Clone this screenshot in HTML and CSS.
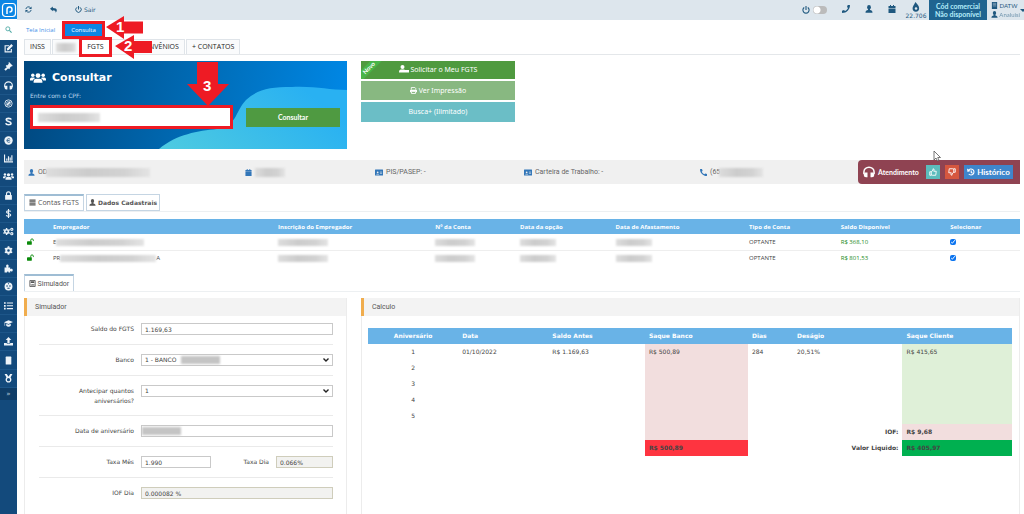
FILE: index.html
```html
<!DOCTYPE html>
<html lang="pt-BR">
<head>
<meta charset="utf-8">
<title>Consulta FGTS</title>
<link rel="stylesheet" href="styles.css">
</head>
<body>
<svg class="defs" aria-hidden="true">
  <symbol id="search" viewBox="0 0 16 16"><circle cx="6.5" cy="6.5" r="4.6" fill="none" stroke="currentColor" stroke-width="2"/><path d="M10 10l5 5" stroke="currentColor" stroke-width="2.4"/></symbol>
  <symbol id="edit" viewBox="0 0 16 16"><path d="M9 3H2v11h11V9" fill="none" stroke="currentColor" stroke-width="2"/><path d="M13 0l3 3-7.500 7.500L5 11.500l.8-3.800z"/></symbol>
  <symbol id="gavel" viewBox="0 0 16 16"><path d="M9 0l6.500 6.500-1.500 1.500-1-.5-3 3 .5 1L9 13 3 7l1.500-1.500 1 .5 3-3-.5-1.500zM5.500 9l2 2L3 15.500 .5 13z"/></symbol>
  <symbol id="headset" viewBox="0 0 16 16"><path d="M1.200 11V8a6.800 6.500 0 0 1 13.600 0v3" fill="none" stroke="currentColor" stroke-width="2"/><path d="M2 8.500h4V15H4a3 3 0 0 1-3-3zM10 8.500h4l1 3.500a3 3 0 0 1-3 3h-2z"/></symbol>
  <symbol id="compass" viewBox="0 0 16 16"><circle cx="8" cy="8" r="6.500" fill="none" stroke="currentColor" stroke-width="1.500"/><circle cx="8" cy="8" r="3.800" fill="none" stroke="currentColor"/><path d="M12 4L9.500 9.500 4 12l2.500-5.500z"/></symbol>
  <symbol id="letter-s" viewBox="0 0 16 16"><path d="M13 4.500C12 2 4 1.500 4 5c0 3.500 8.500 2.500 8.500 6 0 3.500-8.500 3.500-9.500 0" fill="none" stroke="currentColor" stroke-width="2.800"/></symbol>
  <symbol id="coin" viewBox="0 0 16 16"><circle cx="8" cy="8" r="7.500"/><path d="M11 6C9 3.500 5 5 5 8s4 4.500 6 2M5.500 8H10" fill="none" stroke="#134a7c" stroke-width="1.300"/></symbol>
  <symbol id="chart" viewBox="0 0 16 16"><path d="M0 1h2v12h14v2H0zM4 8h2v4H4zM7 4h2v8H7zM10 6h2v6h-2zM13 2h2v10h-2z"/></symbol>
  <symbol id="users" viewBox="0 0 20 16"><circle cx="10" cy="5" r="3"/><circle cx="3.500" cy="4.500" r="2.200"/><circle cx="16.500" cy="4.500" r="2.200"/><path d="M4.500 14v-2a3.500 3 0 0 1 3-3h5a3.500 3 0 0 1 3 3v2zM0 11V9.500A2 2 0 0 1 2 7.500h3.500L6 8.500a4 4 0 0 0-2.500 2.500zM20 11V9.500a2 2 0 0 0-2-2h-3.500l-.5 1a4 4 0 0 1 2.500 2.500z"/></symbol>
  <symbol id="lock" viewBox="0 0 16 16"><path d="M4.500 8V5a3.500 3.500 0 0 1 7 0v3" fill="none" stroke="currentColor" stroke-width="2"/><rect x="2" y="7" width="12" height="8.500" rx="1"/></symbol>
  <symbol id="unlock" viewBox="0 0 16 16"><path d="M8.500 8V5a3 3 0 0 1 6 0v2" fill="none" stroke="currentColor" stroke-width="2"/><rect x="0" y="7.500" width="11" height="8" rx="1"/></symbol>
  <symbol id="dollar" viewBox="0 0 16 16"><path d="M12 4.500C11 2.500 4.500 2.500 4.500 5.300c0 3 7.500 2.200 7.500 5.300 0 3-7 3-8 .4M8 0v16" fill="none" stroke="currentColor" stroke-width="2"/></symbol>
  <symbol id="cog" viewBox="0 0 16 16"><circle cx="8" cy="8" r="4" fill="none" stroke="currentColor" stroke-width="3.400"/><path d="M8 .5V3M8 13v2.500M1.500 4.250l2.200 1.250M12.300 10.500l2.200 1.250M1.500 11.750l2.200-1.250M12.300 5.500l2.200-1.250" stroke="currentColor" stroke-width="3"/></symbol>
  <symbol id="cogs" viewBox="0 0 20 16"><circle cx="6.500" cy="8" r="3.300" fill="none" stroke="currentColor" stroke-width="2.800"/><path d="M6.500 1.500V4M6.500 12v2.500M.8 4.800L3 6M10 10l2.200 1.200M.8 11.200L3 10M10 6l2.200-1.200" stroke="currentColor" stroke-width="2.600"/><circle cx="16" cy="4" r="2" fill="none" stroke="currentColor" stroke-width="2"/><circle cx="16" cy="12" r="2" fill="none" stroke="currentColor" stroke-width="2"/></symbol>
  <symbol id="puzzle" viewBox="0 0 16 16"><path d="M1 6h3.500C3 3 4 1 6 1s3 2 1.500 5H11v3.500C13 8 15.500 8.500 15.500 11S13 13.500 11 12.500V15H8c.8-2.500-3.200-2.500-2.500 0H1z"/></symbol>
  <symbol id="palette" viewBox="0 0 16 16"><circle cx="8" cy="8" r="7"/><path d="M4 6h3v2H4zM9 6h3v2H9zM6 10h4v2H6zM7 2h2v2H7z" fill="#134a7c"/></symbol>
  <symbol id="tasks" viewBox="0 0 16 16"><path d="M0 2h3v3H0zM0 7h3v3H0zM0 12h3v3H0zM5 2.500h11v2H5zM5 7.500h11v2H5zM5 12.500h11v2H5z"/></symbol>
  <symbol id="grad" viewBox="0 0 16 16"><path d="M8 2l8 3.500L8 9 2 6.500V12H1V5.500zM4 8.500l4 1.800 4-1.800V12c-2 2.500-6 2.500-8 0z"/></symbol>
  <symbol id="upload" viewBox="0 0 16 16"><path d="M8 0l5 5.500h-3V11H6V5.500H3zM0 10.500h5V12h6v-1.500h5V15H0z"/></symbol>
  <symbol id="device" viewBox="0 0 16 16"><rect x="3" y="1" width="10" height="14" rx="1"/></symbol>
  <symbol id="medal" viewBox="0 0 16 16"><circle cx="8" cy="10" r="4" fill="none" stroke="currentColor" stroke-width="2.400"/><path d="M1 0h4l3 5 3-5h4l-4 7H5z"/></symbol>
  <symbol id="refresh" viewBox="0 0 16 16"><path d="M2 7a6 6 0 0 1 10.500-3M14 9a6 6 0 0 1-10.500 3" fill="none" stroke="currentColor" stroke-width="2.200"/><path d="M15 1v6H9zM1 15V9h6z"/></symbol>
  <symbol id="reply" viewBox="0 0 16 16"><path d="M0 6.500L6.500 1v3.500C12 4.500 16 6 15.500 10c0 2-1.500 4-3 5 1-4-1.500-5.500-6-5.500V12z"/></symbol>
  <symbol id="power" viewBox="0 0 16 16"><path d="M4.500 3a6.200 6.200 0 1 0 7 0M8 0v8" fill="none" stroke="currentColor" stroke-width="2.200"/></symbol>
  <symbol id="phone" viewBox="0 0 16 16"><path d="M15 0l1 .5C16 9 9 16 .5 16L0 15v-3.500L4 10l2 2c3-1.500 4.500-3 6-6l-2-2 1.500-4z"/></symbol>
  <symbol id="phone-left" viewBox="0 0 16 16"><path d="M1 0L0 .5C0 9 7 16 15.500 16l.5-1v-3.500L12 10l-2 2C7 10.500 5.500 9 4 6l2-2L4.500 0z"/></symbol>
  <symbol id="user" viewBox="0 0 16 16"><ellipse cx="8" cy="4.500" rx="3.800" ry="4.500"/><path d="M6 8h4v2c3 .5 5 1.500 5 5.500H1C1 11.500 3 10.500 6 10z"/></symbol>
  <symbol id="calendar" viewBox="0 0 16 16"><path d="M4 0h2v2h4V0h2v2h3v4H1V2h3zM1 7h14v9H1z"/></symbol>
  <symbol id="fire" viewBox="0 0 16 16"><path d="M7 0c2 3 6 5.500 6 10a5.200 5.500 0 0 1-10.500 0C2.500 7 5 5 7 0z"/><circle cx="8" cy="10.500" r="2" fill="#dde6ed"/></symbol>
  <symbol id="building" viewBox="0 0 16 16"><path d="M2 0h12v16H2z"/><path d="M4 3h8M4 6h8M4 9h8" stroke="#dde6ed"/></symbol>
  <symbol id="user-plus" viewBox="0 0 20 16"><circle cx="7" cy="4" r="4"/><path d="M0 15c0-4.500 1.500-6 4-6h6c1 0 1.500.5 2 1v5zM10 10h10v5H10z"/></symbol>
  <symbol id="print" viewBox="0 0 16 16"><path d="M3 6V1h8l2 2v3M3.500 10h9v5h-9z" fill="none" stroke="currentColor" stroke-width="2"/><path d="M0 12V8a2 2 0 0 1 2-2h12a2 2 0 0 1 2 2v4h-3V9.500H3V12z"/></symbol>
  <symbol id="idcard" viewBox="0 0 18 14"><rect width="18" height="14" rx="1"/><path d="M11 6h5M11 9h5M3 11h6" stroke="#efefef" stroke-width="1.300"/><circle cx="6" cy="6.500" r="2" fill="#efefef"/></symbol>
  <symbol id="list" viewBox="0 0 16 16"><path d="M1 1h14v3H1zM1 5h14v2.500H1zM1 8.500h14V11H1zM1 12h14v3H1z"/></symbol>
  <symbol id="calc" viewBox="0 0 16 16"><path d="M2 1h12v14H2z" fill="none" stroke="currentColor" stroke-width="2"/><path d="M4 3h8v4H4zM4 9h2v2H4zM7 9h2v2H7zM10 9h2v4h-2zM4 12h5v1H4z"/></symbol>
  <symbol id="thumb" viewBox="0 0 16 16"><path d="M1.500 7.500h3v7h-3zM4.500 8L8 4V1.500c2.500 0 2.500 2 1.500 5h5l-1 8h-7l-2-1" fill="none" stroke="currentColor" stroke-width="1.800"/></symbol>
  <symbol id="history" viewBox="0 0 16 16"><path d="M3 4.500A6 6 0 1 1 3.500 12M8.500 5v4l2.500 1.500" fill="none" stroke="currentColor" stroke-width="2.200"/><path d="M0 1l1 7 6-2z"/></symbol>
</svg>

<aside class="sidebar">
  <a class="logo" href="#" aria-label="Início"><svg viewBox="0 0 16 16"><rect x="1.500" y="1.500" width="13" height="13" rx="3" fill="none" stroke="#fff" stroke-width="1.200"/><path d="M6 12V7.500A2.500 2.500 0 1 1 8.500 10" fill="none" stroke="#fff" stroke-width="1.500"/></svg></a>
  <button class="side-search" aria-label="Pesquisar"><svg class="ico"><use href="#search"/></svg></button>
  <nav class="side-nav">
    <a href="#" aria-label="Editar"><svg class="ico"><use href="#edit"/></svg></a>
    <a href="#" aria-label="Jurídico"><svg class="ico"><use href="#gavel"/></svg></a>
    <a href="#" aria-label="Atendimento"><svg class="ico"><use href="#headset"/></svg></a>
    <a href="#" aria-label="Navegar"><svg class="ico"><use href="#compass"/></svg></a>
    <a href="#" aria-label="Simulações"><svg class="ico"><use href="#letter-s"/></svg></a>
    <a href="#" aria-label="Moeda"><svg class="ico"><use href="#coin"/></svg></a>
    <a href="#" aria-label="Relatórios"><svg class="ico"><use href="#chart"/></svg></a>
    <a href="#" aria-label="Clientes"><svg class="ico wide"><use href="#users"/></svg></a>
    <a href="#" aria-label="Acessos"><svg class="ico"><use href="#lock"/></svg></a>
    <a href="#" aria-label="Financeiro"><svg class="ico"><use href="#dollar"/></svg></a>
    <a href="#" aria-label="Processos"><svg class="ico wide"><use href="#cogs"/></svg></a>
    <a href="#" aria-label="Configurações"><svg class="ico"><use href="#cog"/></svg></a>
    <a href="#" aria-label="Integrações"><svg class="ico"><use href="#puzzle"/></svg></a>
    <a href="#" aria-label="Aparência"><svg class="ico"><use href="#palette"/></svg></a>
    <a href="#" aria-label="Tarefas"><svg class="ico"><use href="#tasks"/></svg></a>
    <a href="#" aria-label="Treinamento"><svg class="ico"><use href="#grad"/></svg></a>
    <a href="#" aria-label="Enviar"><svg class="ico"><use href="#upload"/></svg></a>
    <a href="#" aria-label="Dispositivo"><svg class="ico"><use href="#device"/></svg></a>
    <a href="#" aria-label="Premiação"><svg class="ico"><use href="#medal"/></svg></a>
  </nav>
  <button class="side-toggle" aria-label="Expandir menu">»</button>
</aside>

<div class="page">
  <header class="topbar">
    <div class="top-left">
      <button aria-label="Atualizar"><svg class="ico"><use href="#refresh"/></svg></button>
      <button aria-label="Voltar"><svg class="ico"><use href="#reply"/></svg></button>
      <button><svg class="ico"><use href="#power"/></svg> Sair</button>
    </div>
    <div class="top-right">
      <div class="power"><svg class="ico"><use href="#power"/></svg><input class="switch" type="checkbox" aria-label="Disponível"></div>
      <button aria-label="Telefone"><svg class="ico"><use href="#phone"/></svg></button>
      <button aria-label="Perfil"><svg class="ico"><use href="#user"/></svg></button>
      <button aria-label="Agenda"><svg class="ico"><use href="#calendar"/></svg></button>
      <div class="fire"><svg class="ico"><use href="#fire"/></svg><span>22.706</span></div>
      <div class="code">Cód comercial<br>Não disponível</div>
      <div class="account"><span><svg class="ico"><use href="#building"/></svg> DATW</span><span><svg class="ico"><use href="#user"/></svg> <i>Analuisi</i></span></div>
      <span class="caret"></span>
    </div>
  </header>

  <main class="content">
    <nav class="crumbs">
      <a href="#">Tela Inicial</a>
      <div class="marked step-one">
        <button class="crumb-btn">Consulta</button>
        <svg class="arrow" width="38" height="24" viewBox="0 0 38 24"><path d="M0 11L18 0v5.500h19v12H18V23z"/><text x="10" y="16">1</text></svg>
      </div>
    </nav>

    <div class="tabs">
      <button>INSS</button>
      <button class="masked" aria-label="Convênio"><span class="blur w20"></span></button>
      <div class="marked step-two">
        <button class="active">FGTS</button>
        <svg class="arrow" width="38" height="24" viewBox="0 0 38 24"><path d="M0 11L19 0v6h18v12H19v6z"/><text x="9" y="16">2</text></svg>
      </div>
      <button class="convenios">CONVÊNIOS</button>
      <button>+ CONTATOS</button>
    </div>

    <section class="columns top">
      <form class="hero">
        <svg class="wave" viewBox="0 0 323 88" preserveAspectRatio="none">
          <defs><linearGradient id="wg" x1="0" y1="1" x2="1" y2="0.600"><stop offset="0" stop-color="#4fcbe0"/><stop offset="1" stop-color="#29b1f2"/></linearGradient></defs>
          <path fill="url(#wg)" d="M135 88C153 73 174 70 193 68C214 64 210 52 222 39C234 28 246 26 268 26C292 25 304 29 323 29V88z"/>
        </svg>
        <h1><svg class="ico hero-ico"><use href="#users"/></svg>Consultar</h1>
        <label for="cpf">Entre com o CPF:</label>
        <div class="hero-row">
          <div class="cpf"><input id="cpf" type="text"><span class="blur"></span>
            <svg class="arrow" width="42" height="45" viewBox="0 0 42 45"><path d="M10 0h21v22h11L21 44 0 22h10z"/><text x="16" y="29">3</text></svg>
          </div>
          <button type="button">Consultar</button>
        </div>
      </form>
      <div class="actions">
        <button class="green"><span class="ribbon">Novo</span><svg class="ico wide"><use href="#user-plus"/></svg> Solicitar o Meu FGTS</button>
        <button class="sage"><svg class="ico"><use href="#print"/></svg> Ver Impressão</button>
        <button class="teal">Busca+ (Ilimitado)</button>
      </div>
    </section>

    <section class="info">
      <span><svg class="ico"><use href="#user"/></svg>OD<i class="blur w104"></i></span>
      <span><svg class="ico"><use href="#calendar"/></svg><i class="blur w30 apart"></i></span>
      <span><svg class="ico wide"><use href="#idcard"/></svg>PIS/PASEP: -</span>
      <span><svg class="ico wide"><use href="#idcard"/></svg>Carteira de Trabalho: -</span>
      <span><svg class="ico"><use href="#phone-left"/></svg>(65<i class="blur w44"></i></span>
      <div class="service">
        <svg class="ico big"><use href="#headset"/></svg><b>Atendimento</b>
        <button class="up" aria-label="Positivo"><svg class="ico"><use href="#thumb"/></svg></button>
        <button class="down" aria-label="Negativo"><svg class="ico flip"><use href="#thumb"/></svg></button>
        <button class="hist"><svg class="ico"><use href="#history"/></svg> Histórico</button>
        <svg class="cursor" width="8" height="12" viewBox="0 0 8 12"><path d="M1 1v9l2-2 1.500 3 1.500-.7L4.700 7.500h2.800z" fill="#fff" stroke="#555" stroke-width=".8"/></svg>
      </div>
    </section>

    <div class="subtabs">
      <button class="on"><svg class="ico"><use href="#list"/></svg> Contas FGTS</button>
      <button class="off"><svg class="ico"><use href="#user"/></svg> Dados Cadastrais</button>
    </div>

    <table class="accounts">
      <colgroup><col class="a1"><col class="a2"><col class="a3"><col class="a4"><col class="a5"><col class="a6"><col class="a7"><col class="a8"><col class="a9"></colgroup>
      <thead><tr><th></th><th>Empregador</th><th>Inscrição do Empregador</th><th>Nº da Conta</th><th>Data da opção</th><th>Data de Afastamento</th><th>Tipo de Conta</th><th>Saldo Disponível</th><th>Selecionar</th></tr></thead>
      <tbody>
        <tr><td><svg class="ico"><use href="#unlock"/></svg></td><td>E<i class="blur w88"></i></td><td><i class="blur w50"></i></td><td><i class="blur w40"></i></td><td><i class="blur w36"></i></td><td><i class="blur w36"></i></td><td>OPTANTE</td><td class="money">R$ 368,10</td><td><input type="checkbox" checked aria-label="Selecionar conta 1"></td></tr>
        <tr><td><svg class="ico"><use href="#unlock"/></svg></td><td>PR<i class="blur w96"></i>A</td><td><i class="blur w50"></i></td><td><i class="blur w40"></i></td><td><i class="blur w36"></i></td><td><i class="blur w36"></i></td><td>OPTANTE</td><td class="money">R$ 801,53</td><td><input type="checkbox" checked aria-label="Selecionar conta 2"></td></tr>
      </tbody>
    </table>

    <div class="subtabs sim"><button class="on"><svg class="ico"><use href="#calc"/></svg> Simulador</button></div>

    <section class="columns panels">
      <form class="panel">
        <h2>Simulador</h2>
        <div class="fields">
          <div class="row first"><label for="saldo">Saldo do FGTS</label><input id="saldo" type="text" value="1.169,63"></div>
          <div class="row"><label for="banco">Banco</label><div class="over"><select id="banco"><option>1 - BANCO</option></select><i class="blur"></i></div></div>
          <div class="row"><label for="antecipar">Antecipar quantos aniversários?</label><select id="antecipar"><option>1</option></select></div>
          <div class="row"><label for="data">Data de aniversário</label><div class="over date"><input id="data" type="text"><i class="blur"></i></div></div>
          <div class="row rates"><label for="mes">Taxa Mês</label><input id="mes" type="text" value="1.990"><label for="dia">Taxa Dia</label><input id="dia" type="text" value="0.066%" readonly></div>
          <div class="row last"><label for="iof">IOF Dia</label><input id="iof" type="text" value="0.000082 %" readonly></div>
        </div>
      </form>
      <div class="panel">
        <h2>Calculo</h2>
        <div class="calc">
          <table>
            <colgroup><col class="c1"><col class="c2"><col class="c3"><col class="c4"><col class="c5"><col class="c6"><col class="c7"></colgroup>
            <thead><tr><th>Aniversário</th><th>Data</th><th>Saldo Antes</th><th>Saque Banco</th><th>Dias</th><th>Deságio</th><th>Saque Cliente</th></tr></thead>
            <tbody>
              <tr><td>1</td><td>01/10/2022</td><td>R$ 1.169,63</td><td class="pink" rowspan="6">R$ 500,89</td><td>284</td><td>20,51%</td><td class="mint" rowspan="5">R$ 415,65</td></tr>
              <tr><td>2</td><td></td><td></td><td></td><td></td></tr>
              <tr><td>3</td><td></td><td></td><td></td><td></td></tr>
              <tr><td>4</td><td></td><td></td><td></td><td></td></tr>
              <tr><td>5</td><td></td><td></td><td></td><td></td></tr>
              <tr class="sum"><td></td><td></td><td></td><th colspan="2" scope="row">IOF:</th><td class="pink">R$ 9,68</td></tr>
              <tr class="sum"><td></td><td></td><td></td><td class="red">R$ 500,89</td><th colspan="2" scope="row">Valor Liquido:</th><td class="strong">R$ 405,97</td></tr>
            </tbody>
          </table>
        </div>
      </div>
    </section>
  </main>
</div>
</body>
</html>
```

FILE: styles.css
```css
* { box-sizing: border-box; }
body { margin: 0; display: flex; min-height: 100vh; background: #fff; color: #444; font: 7px/10px "DejaVu Sans", sans-serif; }
button, input, select { font: inherit; color: inherit; margin: 0; padding: 0; border: 0; border-radius: 0; background: none; }
a { text-decoration: none; }
h1, h2 { margin: 0; }
i { font-style: normal; }
table { width: 100%; border-collapse: collapse; table-layout: fixed; }
.defs { position: absolute; width: 0; height: 0; }
.ico { width: 7px; height: 7px; fill: currentColor; vertical-align: -1px; flex: none; }
.ico.wide { width: 10px; height: 8px; }
.blur { display: inline-block; height: 9px; vertical-align: middle; background: linear-gradient(90deg, #ddd, #ccc 40%, #d2d2d2 75%, #e4e4e4); filter: blur(1px); }
.w20 { width: 20px; } .w30 { width: 30px; } .w36 { width: 36px; } .w40 { width: 40px; } .w44 { width: 44px; }
.w50 { width: 50px; } .w88 { width: 88px; } .w96 { width: 96px; } .w104 { width: 104px; }

.sidebar { width: 17px; flex: none; background: #134a7c; display: flex; flex-direction: column; color: #fff; }
.logo { height: 19px; background: #0b86e4; display: grid; place-items: center; }
.logo svg { width: 16px; height: 16px; }
.side-search { height: 21px; background: #fff; color: #4aa7a2; display: grid; place-items: center; }
.side-nav { height: 348px; display: grid; grid-auto-rows: 1fr; }
.side-nav a { display: grid; place-items: center; color: #eef4f9; border-bottom: 1px solid #1d5689; }
.side-nav .ico { width: 9px; height: 9px; }
.side-nav .wide { width: 11px; }
.side-toggle { height: 12px; background: #0f3d67; color: #b9cbdb; line-height: 10px; }

.page { flex: 1; min-width: 0; display: flex; flex-direction: column; }
.topbar { height: 20px; background: #dde6ed; color: #1f587f; display: flex; justify-content: space-between; align-items: center; padding-left: 8px; }
.top-left { display: flex; gap: 18px; font-size: 6px; }
.top-right { display: flex; align-items: center; height: 100%; gap: 15px; }
.top-right > button .ico { width: 8px; height: 8px; }
.power { display: flex; align-items: center; gap: 3px; }
.power .ico { width: 8px; height: 8px; }
.switch { appearance: none; width: 14px; height: 8px; border-radius: 4px; background: radial-gradient(circle at 4px 4px, #fff 3px, #bbb 4px); }
.fire { display: flex; flex-direction: column; align-items: center; width: 20px; font-size: 6px; line-height: 7px; margin: 0 -12px 0 -5px; }
.fire .ico { width: 10px; height: 10px; }
.code { width: 58px; height: 100%; background: #1f6490; color: #b4ecfa; font: 700 7px/8px Lato, sans-serif; text-align: center; padding-top: 2px; }
.account { display: flex; flex-direction: column; font: 6px/9px Lato, sans-serif; width: 26px; margin: 0 -12px 0 -11px; white-space: nowrap; }
.account i { opacity: .6; }
.caret { border: 3px solid transparent; border-top-color: #1f587f; border-bottom: 0; width: 6px; margin-right: -2px; }
.topbar { overflow: hidden; }

.content { flex: 1; display: flex; flex-direction: column; padding: 0 4px 0 7px; }
.crumbs { display: flex; align-items: center; height: 19px; gap: 10px; padding-left: 2px; font: 7px/10px "Open Sans", sans-serif; }
.crumbs a { color: #3f8fe8; width: 29px; white-space: nowrap; font-size: 6px; }
.marked { position: relative; outline: 3px solid #ee1b24; }
.crumb-btn { display: block; width: 37px; height: 12px; background: #0b86e4; color: #fff; font-size: 6px; }
.arrow { position: absolute; z-index: 3; fill: #ee1b24; }
.arrow text { fill: #fff; font: 700 15px "Liberation Sans", sans-serif; }
.step-one .arrow { left: 41px; top: -8px; }
.tabs { display: flex; gap: 1px; height: 16px; border-bottom: 1px solid #e4e7ea; font: 7px/10px "Open Sans", sans-serif; color: #222; }
.tabs button { height: 15px; padding: 0 5px; border: 1px solid #dfe4e9; border-bottom: 0; background: #fafbfc; white-space: nowrap; }
.tabs .masked { width: 28px; padding: 0 3px; }
.tabs .active { width: 27px; border: 0; background: #fff; }
.step-two { margin: 1px 0 0 1px; z-index: 2; height: 14px; }
.tabs .active { height: 14px; }
.step-two .arrow { left: 33px; top: -5px; }
.tabs .convenios { width: 75px; text-align: right; }

.columns { display: grid; grid-template-columns: 323fr 659fr; gap: 14px; }
.top { margin-top: 6px; }
.hero { position: relative; height: 88px; padding: 10px 7px 0 6px; background: linear-gradient(100deg, #00477e, #0070bd 60%, #0089e8); color: #fff; }
.wave { position: absolute; inset: 0; width: 100%; height: 100%; }
.hero h1, .hero label, .hero-row { position: relative; }
.hero h1 { display: flex; align-items: center; gap: 6px; font: 700 11px/14px "DejaVu Sans", sans-serif; }
.hero .hero-ico { width: 16px; height: 14px; }
.hero label { display: block; margin-top: 6px; font-size: 6px; line-height: 10px; color: #bcd8ee; }
.hero-row { display: flex; justify-content: space-between; align-items: center; margin-top: 4px; }
.cpf { position: relative; width: 203px; height: 24px; }
.cpf input { width: 100%; height: 100%; background: #fff; border: 3px solid #ee1b24; }
.cpf .blur { position: absolute; left: 8px; top: 8px; width: 62px; }
.cpf .arrow { left: 157px; top: -43px; }
.hero-row > button { width: 94px; height: 19px; background: #4f9a41; font: 700 7px/10px Lato, sans-serif; }
.actions { width: 154px; display: grid; grid-template-rows: 18px 19px 20px; gap: 2px; color: #fff; font: 7px/10px "Noto Sans", sans-serif; align-content: start; }
.green { position: relative; overflow: hidden; background: #4f9a3f; }
.actions .ribbon { position: absolute; left: -10px; top: 3px; width: 36px; background: #49b548; font: 700 6px/8px Lato, sans-serif; transform: rotate(-45deg); }
.actions .sage { background: #88b881; }
.actions .teal { background: #6bbec6; }
.actions .green { background: #4f9a3f; }

.info { margin-top: 11px; height: 24px; background: #f0f0f0; display: grid; grid-template-columns: 217fr 130fr 149fr 176fr 158fr 162px; align-items: center; padding-left: 4px; color: #666; font: 7px/10px Roboto, sans-serif; }
.info > span { display: flex; align-items: center; gap: 3px; }
.info > span .ico { color: #3276b8; }
.info .blur { margin-left: -4px; }
.info .apart { margin-left: 0; }
.info .wide { width: 8px; height: 7px; }
.service { position: relative; height: 24px; background: #8f4352; border-radius: 4px 0 0 4px; color: #fff; display: flex; align-items: center; padding: 0 7px 0 5px; font: 7px/10px Lato, sans-serif; }
.big.ico { width: 12px; height: 12px; }
.service b { margin: 0 auto 0 3px; }
.service button { height: 14px; }
.up, .down { width: 14px; margin-right: 5px; }
.service .up { background: #5cbcbc; margin-right: 5px; }
.service .down { background: #d6573f; margin-right: 5px; }
.service button .ico { width: 8px; height: 8px; }
.flip { transform: rotate(180deg); }
.service .hist { width: 49px; background: #3f86cc; font-size: 8px; font-weight: 700; white-space: nowrap; }
.cursor { position: absolute; left: 75px; top: -10px; }

.subtabs { display: flex; gap: 2px; margin-top: 10px; border-bottom: 1px solid #edf0f2; }
.subtabs button { height: 17px; border: 1px solid #c5d5e3; background: #fff; white-space: nowrap; color: #555; font: 7px/10px "Open Sans", sans-serif; }
.subtabs .on { width: 60px; border-top: 2px solid #9fbdd4; }
.subtabs .off { width: 74px; font: 700 6px/10px "DejaVu Sans", sans-serif; }
.subtabs.sim { margin-top: 8px; }
.subtabs.sim .on { width: 50px; border-bottom: 0; font: 7px/10px Roboto, sans-serif; }

.accounts { margin-top: 7px; font: 6px/10px "Open Sans", sans-serif; }
.accounts th { height: 15px; padding: 0; background: #69b3e7; color: #fff; text-align: left; white-space: nowrap; font: 700 6px/10px "Open Sans", sans-serif; }
.accounts td { height: 16px; padding: 0; white-space: nowrap; line-height: 8px; }
.accounts tbody tr + tr td { border-top: 1px solid #eee; }
.accounts td:first-child { padding-left: 3px; color: #0a8a0a; }
.accounts .blur { height: 7px; }
.accounts .money { color: #1b8a1b; }
.accounts input { width: 6px; height: 6px; display: block; accent-color: #0b74f0; }
.a1 { width: 2.9%; } .a2 { width: 22.6%; } .a3 { width: 15.8%; } .a4 { width: 8.5%; } .a5 { width: 9.6%; } .a6 { width: 13.4%; } .a7 { width: 9.2%; } .a8 { width: 11%; } .a9 { width: 7%; }

.panels { flex: 1; margin-top: 6px; }
.panel { border: 1px solid #ececec; border-top: 0; border-bottom: 0; }
.panel h2 { height: 18px; margin-left: -1px; padding-left: 8px; border-left: 3px solid #f0ad4e; background: #f3f3f3; color: #555; font: 7px/18px Roboto, sans-serif; }
.fields { padding: 0 13px 0 14px; }
.row { display: grid; grid-template-columns: 95px 1fr; gap: 7px; align-items: start; padding: 9px 0; border-bottom: 1px solid #eaeaea; }
.row.first { padding-top: 7px; }
.row.last { border: 0; }
.row label { text-align: right; padding-top: 1px; font-size: 6px; }
.row input, .row select { width: 100%; height: 12px; border: 1px solid #c9c9c9; padding: 0 3px; font-size: 6px; line-height: 10px; background: #fff; }
.row input[readonly] { background: #f2f2f0; border-color: #cfcdbb; }
.row select { appearance: none; background: url("data:image/svg+xml,%3Csvg xmlns='http://www.w3.org/2000/svg' viewBox='0 0 6 4'%3E%3Cpath d='M.5.5L3 3 5.500.5' fill='none' stroke='%23222' stroke-width='1.400'/%3E%3C/svg%3E") no-repeat right 3px center / 6px 4px #fff; }
.over { position: relative; display: grid; }
.over .blur { position: absolute; left: 40px; top: 2px; width: 39px; height: 8px; background: #c4c4c4; }
.over.date .blur { left: 1px; }
.row.rates { grid-template-columns: 95px 70px 1fr 57px; column-gap: 7px; }

.calc { padding: 12px 7px 12px 6px; }
.calc td, .calc th { height: 16px; padding: 3px 4px 0; text-align: left; white-space: nowrap; font-size: 6px; line-height: 10px; vertical-align: top; }
.calc thead th { background: #69b3e7; color: #fff; }
.calc td:first-child, .calc th:first-child { text-align: center; }
.calc tbody th { text-align: right; }
.calc .sum td { font-weight: 700; }
.calc .pink { background: #f2dede; }
.calc .mint { background: #dff0d8; }
.calc .red { background: #fe3440; }
.calc .strong { background: #00b050; }
.c1 { width: 14%; } .c2 { width: 14%; } .c3 { width: 15%; } .c4 { width: 16%; } .c5 { width: 7%; } .c6 { width: 17%; } .c7 { width: 17%; }
```
